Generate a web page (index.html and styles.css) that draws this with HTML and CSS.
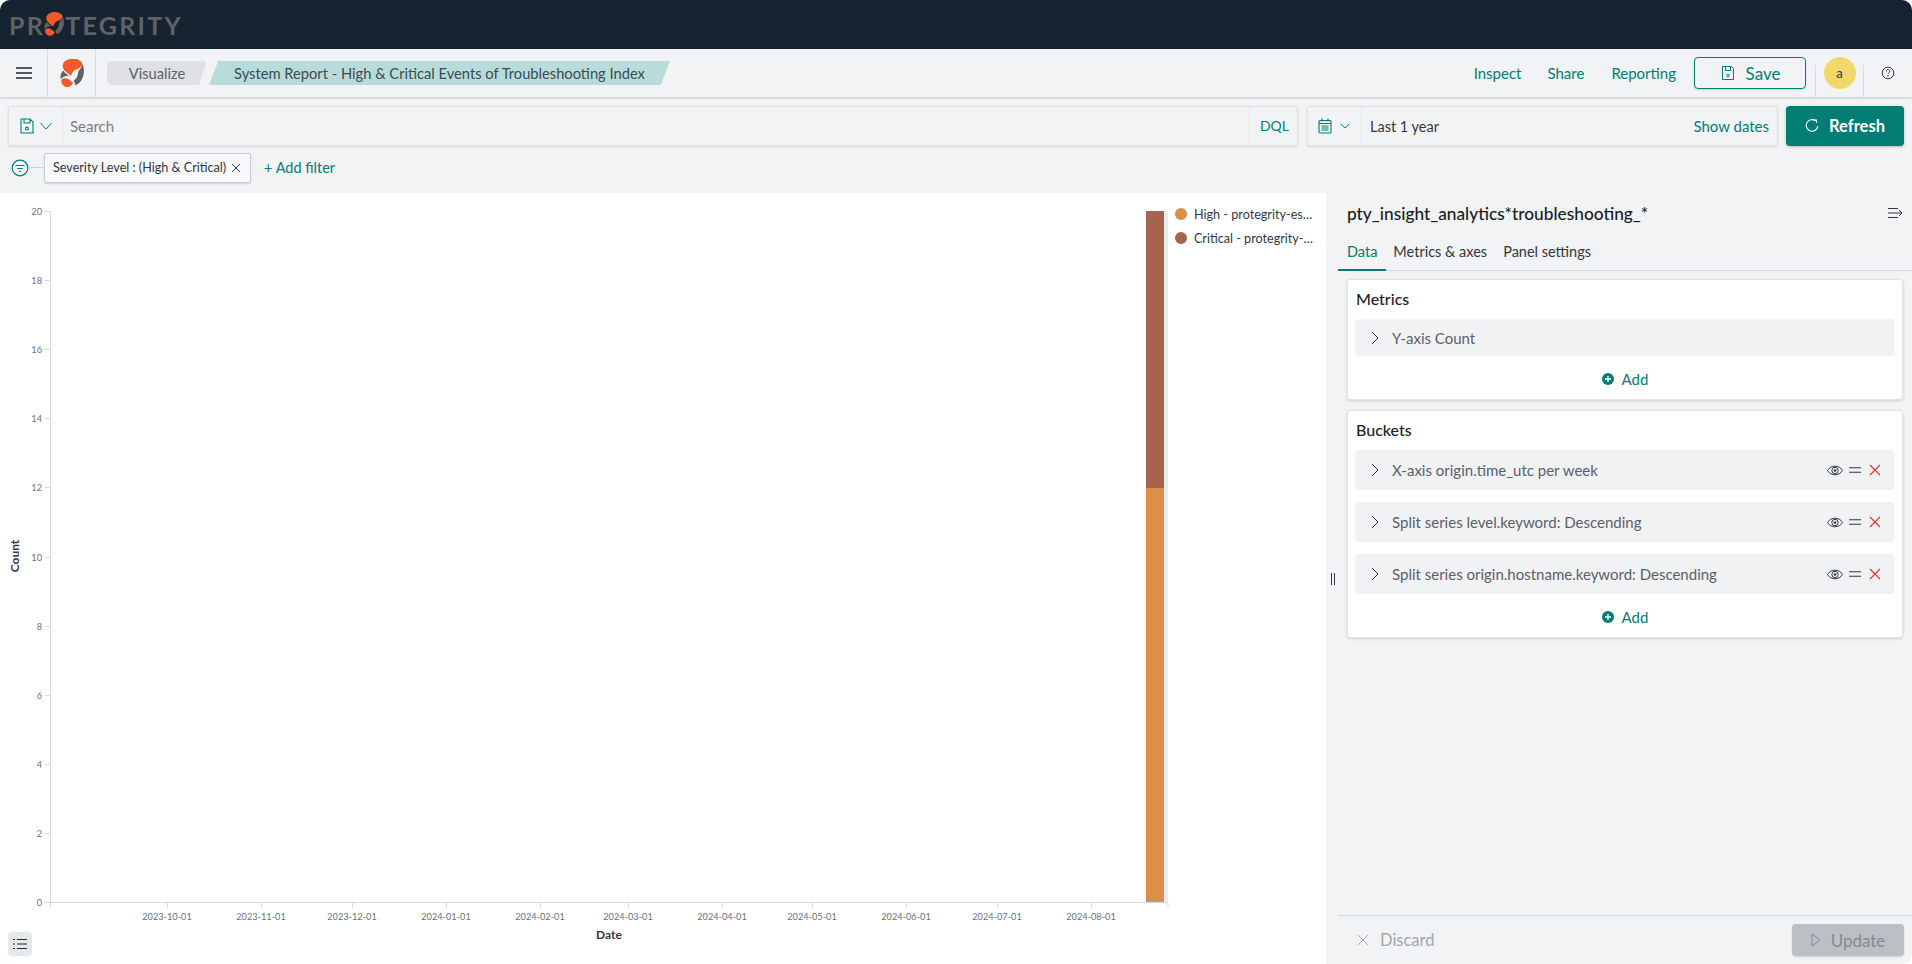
FILE: index.html
```html
<!DOCTYPE html>
<html lang="en">
<head>
    <meta charset="UTF-8">
    <meta name="viewport" content="width=device-width, initial-scale=1.0">
    <title>System Report - High &amp; Critical Events of Troubleshooting Index</title>
    <link rel="stylesheet" href="styles.css">
</head>
<body>
    <div class="app">
        <header class="topbar">
            <div class="brand">
                <span>PR</span>
                <svg class="brand-mark" viewBox="0 0 24 28" width="20" height="24">
                    <path fill="#f15a29" d="M7 1C12-1.500 20-.5 22 4 23 7 20 9 17 10 14 11 12 13 11 17 8 14 5 13 3.500 10 1.500 6 3.500 2.500 7 1Z"/>
                    <path fill="#5f6163" d="M22.500 5C24.500 10 24.500 15 22 20 20 24 17 26 15 26 15 24 14.500 23 13.500 22L16.500 19C18 16 18 14 18.500 12 20 10.500 22 8 22.500 5Z"/>
                    <path fill="#f15a29" d="M1.500 20.500C4 18.500 7 19 9 20.500 10.500 21.500 12 23 13 23.500 12.500 26 10 28 6.500 28 3 27.500.5 24 1.500 20.500Z"/>
                    <path fill="#5f6163" d="M3 11.500C5 14 7 15 9 16.500 6 16.500 3 18 .7 20 0 17 1 14 3 11.500Z"/>
                </svg>
                <span>TEGRITY</span>
            </div>
        </header>

        <nav class="navbar">
            <button class="menu-btn" aria-label="Menu">
                <svg viewBox="0 0 16 12" width="16" height="12"><path d="M0 1h16M0 6h16M0 11h16" stroke="#1a2b3a" stroke-width="1.700"/></svg>
            </button>
            <div class="nav-logo">
                <svg viewBox="0 0 24 28" width="24" height="28">
                    <path fill="#f15a29" d="M7 1C12-1.500 20-.5 22 4 23 7 20 9 17 10 14 11 12 13 11 17 8 14 5 13 3.500 10 1.500 6 3.500 2.500 7 1Z"/>
                    <path fill="#5f6163" d="M22.500 5C24.500 10 24.500 15 22 20 20 24 17 26 15 26 15 24 14.500 23 13.500 22L16.500 19C18 16 18 14 18.500 12 20 10.500 22 8 22.500 5Z"/>
                    <path fill="#f15a29" d="M1.500 20.500C4 18.500 7 19 9 20.500 10.500 21.500 12 23 13 23.500 12.500 26 10 28 6.500 28 3 27.500.5 24 1.500 20.500Z"/>
                    <path fill="#5f6163" d="M3 11.500C5 14 7 15 9 16.500 6 16.500 3 18 .7 20 0 17 1 14 3 11.500Z"/>
                </svg>
            </div>
            <div class="crumbs">
                <span class="crumb crumb-first">Visualize</span>
                <span class="crumb crumb-last">System Report - High &amp; Critical Events of Troubleshooting Index</span>
            </div>
            <div class="nav-actions">
                <a class="nav-link">Inspect</a>
                <a class="nav-link">Share</a>
                <a class="nav-link">Reporting</a>
                <button class="save-btn">
                    <svg viewBox="0 0 16 16" width="16" height="16"><path fill="none" stroke="#017d73" d="M2.500 1.500h9l2 2v11h-11zM5.500 1.500v4h5v-4"/><circle cx="8" cy="10.500" r="1.300" fill="none" stroke="#017d73"/></svg>
                    Save
                </button>
                <div class="nav-avatar"><span class="avatar">a</span></div>
                <div class="nav-help">
                    <svg viewBox="0 0 14 14" width="14" height="14"><circle cx="7" cy="7" r="5.800" fill="none" stroke="#343741"/><path d="M5.200 5.400C5.300 3 8.900 3.200 8.900 5.400 8.900 6.800 7 6.800 7 8.300" fill="none" stroke="#343741"/><circle cx="7" cy="10" r=".7" fill="#343741"/></svg>
                </div>
            </div>
        </nav>

        <section class="query">
            <div class="query-row">
                <div class="search-box">
                    <div class="saved-btn">
                        <svg viewBox="0 0 14 16" width="14" height="16"><path fill="none" stroke="#017d73" stroke-width="1.100" d="M1 1h9l3 3v11H1zM4 1v4h6V1"/><circle cx="7" cy="10.500" r="1.400" fill="none" stroke="#017d73" stroke-width="1.100"/></svg>
                        <svg viewBox="0 0 12 8" width="12" height="8"><path d="M.5 1l5.500 6 5.500-6" fill="none" stroke="#017d73"/></svg>
                    </div>
                    <div class="search-input">Search</div>
                    <div class="dql">DQL</div>
                </div>
                <div class="date-box">
                    <div class="date-btn">
                        <svg viewBox="0 0 14 16" width="14" height="16"><rect x="1" y="2.500" width="12" height="12.500" rx="1" fill="none" stroke="#017d73" stroke-width="1.100"/><path d="M1 5.500h12M4 .5v3M10 .5v3M3.500 8h7M3.500 10h7M3.500 12h7" stroke="#017d73" stroke-width="1.100" fill="none"/></svg>
                        <svg viewBox="0 0 10 6" width="10" height="6"><path d="M.5 .8L5 5 9.500 .8" fill="none" stroke="#017d73"/></svg>
                    </div>
                    <div class="date-text">Last 1 year</div>
                    <a class="show-dates">Show dates</a>
                </div>
                <button class="refresh-btn">
                    <svg viewBox="0 0 14 14" width="14" height="14"><path d="M10.500 1.800A5.800 5.800 0 1 0 12.800 7" fill="none" stroke="#fff" stroke-width="1.100"/><path d="M8.500 1h3v3" fill="none" stroke="#fff" stroke-width="1.100"/></svg>
                    Refresh
                </button>
            </div>
            <div class="filter-row">
                <svg class="filter-icon" viewBox="0 0 18 18" width="18" height="18"><circle cx="9" cy="9" r="7.800" fill="none" stroke="#017d73" stroke-width="1.200"/><path d="M4.500 6.500h9M6.200 9.500h5.600M8 12.500h2" stroke="#017d73" stroke-width="1.200"/></svg>
                <span class="filter-dash"></span>
                <div class="chip">
                    <span>Severity Level : (High &amp; Critical)</span>
                    <svg viewBox="0 0 10 10" width="10" height="10"><path d="M1 1l8 8M9 1l-8 8" stroke="#343741"/></svg>
                </div>
                <a class="add-filter">+ Add filter</a>
            </div>
        </section>

        <main class="main">
            <section class="chart-area">
                <svg class="chart" viewBox="0 0 1170 771" width="1170" height="771">
                    <rect x="1164" y="18" width="4" height="691" fill="#e9ebf2"/>
                    <g stroke="#d3dae6" fill="none">
                        <path d="M50.500 18V715M50.500 709.500H1168M1168 709.500V715"/>
                        <path d="M45 18.500h6M45 87.500h6M45 156.500h6M45 225.500h6M45 294.500h6M45 364.500h6M45 433.500h6M45 502.500h6M45 571.500h6M45 640.500h6M45 709.500h6"/>
                        <path d="M167.500 709V715M261.500 709V715M352.500 709V715M446.500 709V715M540.500 709V715M628.500 709V715M722.500 709V715M812.500 709V715M906.500 709V715M997.500 709V715M1091.500 709V715"/>
                    </g>
                    <rect x="1146" y="18" width="18" height="277" fill="#a8634f"/>
                    <rect x="1146" y="295" width="18" height="414" fill="#dd8e47"/>
                    <g class="tick" text-anchor="end">
                        <text x="42" y="22">20</text><text x="42" y="91">18</text><text x="42" y="160">16</text><text x="42" y="229">14</text><text x="42" y="298">12</text><text x="42" y="368">10</text><text x="42" y="437">8</text><text x="42" y="506">6</text><text x="42" y="575">4</text><text x="42" y="644">2</text><text x="42" y="713">0</text>
                    </g>
                    <g class="tick" text-anchor="middle">
                        <text x="167" y="727">2023-10-01</text><text x="261" y="727">2023-11-01</text><text x="352" y="727">2023-12-01</text><text x="446" y="727">2024-01-01</text><text x="540" y="727">2024-02-01</text><text x="628" y="727">2024-03-01</text><text x="722" y="727">2024-04-01</text><text x="812" y="727">2024-05-01</text><text x="906" y="727">2024-06-01</text><text x="997" y="727">2024-07-01</text><text x="1091" y="727">2024-08-01</text>
                    </g>
                    <text class="axis-title" x="609" y="746" text-anchor="middle">Date</text>
                    <text class="axis-title" transform="translate(19 363) rotate(-90)" text-anchor="middle">Count</text>
                </svg>
                <ul class="legend">
                    <li><span class="dot dot-high"></span><span class="legend-text">High - protegrity-es…</span></li>
                    <li><span class="dot dot-critical"></span><span class="legend-text">Critical - protegrity-…</span></li>
                </ul>
                <button class="list-btn" aria-label="Toggle legend">
                    <svg viewBox="0 0 14 12" width="14" height="12"><path d="M0 1.500h2M4 1.500h10M0 6h2M4 6h10M0 10.500h2M4 10.500h10" stroke="#1a2b3a" stroke-width="1.200"/></svg>
                </button>
            </section>

            <aside class="panel">
                <span class="panel-handle"></span>
                <div class="panel-head">
                    <h2>pty_insight_analytics*troubleshooting_*</h2>
                    <svg viewBox="0 0 16 12" width="16" height="12"><path d="M0 1.500h10M0 6h14M0 10.500h10M11 3l3 3-3 3" fill="none" stroke="#343741"/></svg>
                </div>
                <div class="tabs">
                    <a class="tab tab-active">Data</a>
                    <a class="tab">Metrics &amp; axes</a>
                    <a class="tab">Panel settings</a>
                </div>

                <div class="card">
                    <h3>Metrics</h3>
                    <div class="agg-row agg-short">
                        <svg class="chevron" viewBox="0 0 8 14" width="8" height="14"><path d="M1 1l6 6-6 6" fill="none" stroke="#343741"/></svg>
                        <span class="agg-label">Y-axis Count</span>
                    </div>
                    <div class="add-row">
                        <svg viewBox="0 0 12 12" width="12" height="12"><circle cx="6" cy="6" r="6" fill="#017d73"/><path d="M3 6h6M6 3v6" stroke="#fff" stroke-width="1.300"/></svg>
                        Add
                    </div>
                </div>

                <div class="card">
                    <h3>Buckets</h3>
                    <div class="agg-list">
                        <div class="agg-row">
                            <svg class="chevron" viewBox="0 0 8 14" width="8" height="14"><path d="M1 1l6 6-6 6" fill="none" stroke="#343741"/></svg>
                            <span class="agg-label">X-axis origin.time_utc per week</span>
                            <div class="agg-icons">
                                <svg viewBox="0 0 16 13" width="16" height="13"><path d="M.5 6.500C3.500 .8 12.500 .8 15.500 6.500 12.500 12.200 3.500 12.200 .5 6.500Z" fill="none" stroke="#343741"/><circle cx="8" cy="6.500" r="3.200" fill="none" stroke="#343741"/><circle cx="8" cy="6.500" r="1.300" fill="#343741"/></svg>
                                <svg viewBox="0 0 12 6" width="12" height="6"><path d="M0 .8h12M0 5.200h12" stroke="#343741" stroke-width="1.100"/></svg>
                                <svg viewBox="0 0 12 12" width="12" height="12"><path d="M1 1l10 10M11 1L1 11" stroke="#d92f2f" stroke-width="1.100"/></svg>
                            </div>
                        </div>
                        <div class="agg-row">
                            <svg class="chevron" viewBox="0 0 8 14" width="8" height="14"><path d="M1 1l6 6-6 6" fill="none" stroke="#343741"/></svg>
                            <span class="agg-label">Split series level.keyword: Descending</span>
                            <div class="agg-icons">
                                <svg viewBox="0 0 16 13" width="16" height="13"><path d="M.5 6.500C3.500 .8 12.500 .8 15.500 6.500 12.500 12.200 3.500 12.200 .5 6.500Z" fill="none" stroke="#343741"/><circle cx="8" cy="6.500" r="3.200" fill="none" stroke="#343741"/><circle cx="8" cy="6.500" r="1.300" fill="#343741"/></svg>
                                <svg viewBox="0 0 12 6" width="12" height="6"><path d="M0 .8h12M0 5.200h12" stroke="#343741" stroke-width="1.100"/></svg>
                                <svg viewBox="0 0 12 12" width="12" height="12"><path d="M1 1l10 10M11 1L1 11" stroke="#d92f2f" stroke-width="1.100"/></svg>
                            </div>
                        </div>
                        <div class="agg-row">
                            <svg class="chevron" viewBox="0 0 8 14" width="8" height="14"><path d="M1 1l6 6-6 6" fill="none" stroke="#343741"/></svg>
                            <span class="agg-label">Split series origin.hostname.keyword: Descending</span>
                            <div class="agg-icons">
                                <svg viewBox="0 0 16 13" width="16" height="13"><path d="M.5 6.500C3.500 .8 12.500 .8 15.500 6.500 12.500 12.200 3.500 12.200 .5 6.500Z" fill="none" stroke="#343741"/><circle cx="8" cy="6.500" r="3.200" fill="none" stroke="#343741"/><circle cx="8" cy="6.500" r="1.300" fill="#343741"/></svg>
                                <svg viewBox="0 0 12 6" width="12" height="6"><path d="M0 .8h12M0 5.200h12" stroke="#343741" stroke-width="1.100"/></svg>
                                <svg viewBox="0 0 12 12" width="12" height="12"><path d="M1 1l10 10M11 1L1 11" stroke="#d92f2f" stroke-width="1.100"/></svg>
                            </div>
                        </div>
                    </div>
                    <div class="add-row">
                        <svg viewBox="0 0 12 12" width="12" height="12"><circle cx="6" cy="6" r="6" fill="#017d73"/><path d="M3 6h6M6 3v6" stroke="#fff" stroke-width="1.300"/></svg>
                        Add
                    </div>
                </div>

                <div class="panel-foot">
                    <a class="discard">
                        <svg viewBox="0 0 12 12" width="12" height="12"><path d="M1 1l10 10M11 1L1 11" stroke="#a3a8ad"/></svg>
                        Discard
                    </a>
                    <button class="update-btn">
                        <svg viewBox="0 0 10 14" width="10" height="14"><path d="M1 1l8 6-8 6z" fill="none" stroke="#868b90"/></svg>
                        Update
                    </button>
                </div>
            </aside>
        </main>
    </div>
</body>
</html>
```

FILE: styles.css
```css
* { box-sizing: border-box; }
body { margin: 0; background: #fff; font-family: "Lato", "Noto Sans", sans-serif; font-size: 14px; color: #343741; }
button { font-family: inherit; border: none; background: none; padding: 0; }
h2, h3 { margin: 0; font-weight: 400; }
svg { display: block; flex-shrink: 0; }

.app { width: 1912px; height: 964px; display: flex; flex-direction: column; overflow: hidden; border-radius: 10px; background: #f1f3f5; }

.topbar { height: 49px; background: #162330; padding: 15px 0 0 9px; }
.brand { display: flex; align-items: center; height: 20px; font-size: 25px; font-weight: 700; letter-spacing: 2.300px; color: #606265; line-height: 20px; }
.brand-mark { margin: -2px 1px 0 -1px; }

.navbar { height: 48px; display: flex; align-items: center; background: #f1f3f5; box-shadow: 0 1px 3px rgba(0, 0, 0, .2); position: relative; }
.menu-btn { width: 48px; height: 48px; display: flex; align-items: center; justify-content: center; border-right: 1px solid #d3dae6; }
.nav-logo { width: 48px; height: 48px; display: flex; align-items: center; justify-content: center; border-right: 1px solid #d3dae6; }
.crumbs { display: flex; gap: 2px; margin-left: 11px; }
.crumb { height: 24px; line-height: 24px; font-size: 14.700px; }
.crumb-first { width: 100px; background: #dfe1e6; color: #5a6069; text-align: center; clip-path: polygon(0 0, 100% 0, 92% 100%, 0 100%); border-radius: 5px; }
.crumb-last { width: 461px; background: #b8dcd9; color: #3d4a52; text-align: center; clip-path: polygon(2% 0, 100% 0, 98% 100%, 0 100%); }
.nav-actions { margin-left: auto; display: flex; align-items: center; height: 48px; }
.nav-link { color: #017d73; font-size: 15px; margin-right: 26px; }
.nav-link:nth-child(2) { margin-right: 27px; }
.nav-link:nth-child(3) { margin-right: 18px; }
.save-btn { width: 112px; height: 32px; display: flex; align-items: center; justify-content: center; gap: 10px; border: 1px solid #017d73; border-radius: 4px; color: #017d73; font-size: 17px; box-shadow: 0 1px 2px rgba(0, 0, 0, .15); }
.nav-avatar { width: 49px; height: 32px; margin-left: 9px; display: flex; align-items: center; justify-content: center; border-left: 1px solid #d3dae6; border-right: 1px solid #d3dae6; align-self: flex-end; }
.avatar { width: 32px; height: 32px; border-radius: 50%; background: #f0d86a; text-align: center; line-height: 32px; font-size: 13px; margin-top: -16px; }
.nav-help { width: 48px; display: flex; justify-content: center; }

.query { height: 96px; padding: 9px 8px 0; }
.query-row { display: flex; height: 40px; }
.search-box { width: 1290px; display: flex; align-items: center; border: 1px solid #dfe3e8; border-radius: 2px; box-shadow: 0 1px 2px rgba(0, 0, 0, .12); }
.saved-btn { width: 54px; height: 100%; display: flex; align-items: center; gap: 6px; padding-left: 11px; border-right: 1px solid #e3e6ea; }
.search-input { flex: 1; padding-left: 7px; font-size: 15px; color: #7a7f87; }
.dql { width: 48px; height: 100%; line-height: 38px; text-align: right; padding-right: 8px; border-left: 1px solid #e3e6ea; color: #017d73; font-size: 14px; }
.date-box { width: 471px; margin-left: 9px; display: flex; align-items: center; border: 1px solid #dfe3e8; border-radius: 2px; box-shadow: 0 1px 2px rgba(0, 0, 0, .12); }
.date-btn { width: 54px; height: 100%; display: flex; align-items: center; gap: 8px; padding-left: 10px; border-right: 1px solid #e3e6ea; }
.date-text { flex: 1; padding-left: 8px; font-size: 14.500px; }
.show-dates { padding-right: 8px; color: #017d73; font-size: 15px; }
.refresh-btn { width: 118px; margin-left: 8px; display: flex; align-items: center; justify-content: center; gap: 10px; background: #017d73; color: #fff; font-size: 16.500px; font-weight: 700; border-radius: 4px; box-shadow: 0 1px 3px rgba(0, 0, 0, .25); }
.filter-row { display: flex; align-items: center; height: 31px; margin-top: 6px; }
.filter-icon { margin-left: 3px; }
.filter-dash { width: 12px; height: 1px; background: #c9ced4; margin: 0 1px 0 2px; }
.chip { width: 207px; height: 30px; display: flex; align-items: center; justify-content: space-between; padding: 0 9px 0 8px; background: #f7f8f9; border: 1px solid #c9ced4; border-radius: 2px; box-shadow: 0 1px 2px rgba(0, 0, 0, .15); font-size: 12.600px; white-space: nowrap; }
.add-filter { margin-left: 13px; color: #017d73; font-size: 14.500px; }

.main { flex: 1; display: flex; min-height: 0; }
.chart-area { width: 1326px; display: flex; background: #fff; position: relative; }
.tick { font-size: 9.200px; fill: #69707d; }
.axis-title { font-size: 12px; font-weight: 700; fill: #343741; }
.legend { list-style: none; margin: 0; padding: 9px 0 0 5px; width: 156px; }
.legend li { display: flex; align-items: center; height: 24px; font-size: 12.600px; white-space: nowrap; }
.dot { width: 12px; height: 12px; border-radius: 50%; margin-right: 7px; }
.dot-high { background: #dd8e47; }
.dot-critical { background: #a8634f; }
.list-btn { position: absolute; left: 8px; bottom: 8px; width: 24px; height: 24px; display: flex; align-items: center; justify-content: center; background: #e6e8ea; border-radius: 4px; }

.panel { flex: 1; display: flex; flex-direction: column; position: relative; padding-left: 12px; }
.panel-handle { position: absolute; left: 5px; top: 380px; width: 4px; height: 12px; border-left: 1px solid #343741; border-right: 1px solid #343741; }
.panel-head { height: 40px; display: flex; align-items: center; justify-content: space-between; padding: 0 8px 0 9px; }
.panel-head h2 { font-size: 17.300px; font-weight: 500; color: #1a1c21; }
.tabs { height: 38px; display: flex; border-bottom: 1px solid #d3dae6; }
.tab { padding: 0 9px; line-height: 37px; font-size: 14.500px; margin-right: -2px; }
.tab-active { color: #017d73; border-bottom: 2px solid #017d73; height: 38px; }

.card { width: 556px; margin: 8px 0 0 9px; background: #fff; border: 1px solid #dfe3e8; border-radius: 3px; box-shadow: 0 1px 3px rgba(0, 0, 0, .15); }
.card + .card { margin-top: 10px; }
.card h3 { height: 39px; line-height: 37px; padding-left: 8px; font-size: 16px; font-weight: 500; color: #1a1c21; }
.agg-list { display: flex; flex-direction: column; gap: 12px; }
.agg-row { height: 40px; margin: 0 7px; display: flex; align-items: center; background: #f1f2f4; border-radius: 4px; padding: 0 14px 0 16px; }
.agg-short { height: 37px; }
.agg-label { margin-left: 13px; font-size: 15px; color: #5a6069; white-space: nowrap; }
.agg-icons { margin-left: auto; display: flex; align-items: center; gap: 6px; }
.agg-icons svg:last-child { margin-left: 2px; }
.add-row { height: 43px; padding-top: 2px; display: flex; align-items: center; justify-content: center; gap: 8px; color: #017d73; font-size: 15px; }

.panel-foot { margin-top: auto; height: 49px; display: flex; align-items: center; justify-content: space-between; border-top: 1px solid #d3dae6; padding: 0 8px 0 19px; }
.discard { display: flex; align-items: center; gap: 11px; color: #a3a8ad; font-size: 16.500px; }
.update-btn { width: 112px; height: 32px; display: flex; align-items: center; justify-content: center; gap: 10px; background: #bcc0c5; color: #868b90; border-radius: 4px; font-size: 17px; box-shadow: 0 1px 2px rgba(0, 0, 0, .15); }
```
